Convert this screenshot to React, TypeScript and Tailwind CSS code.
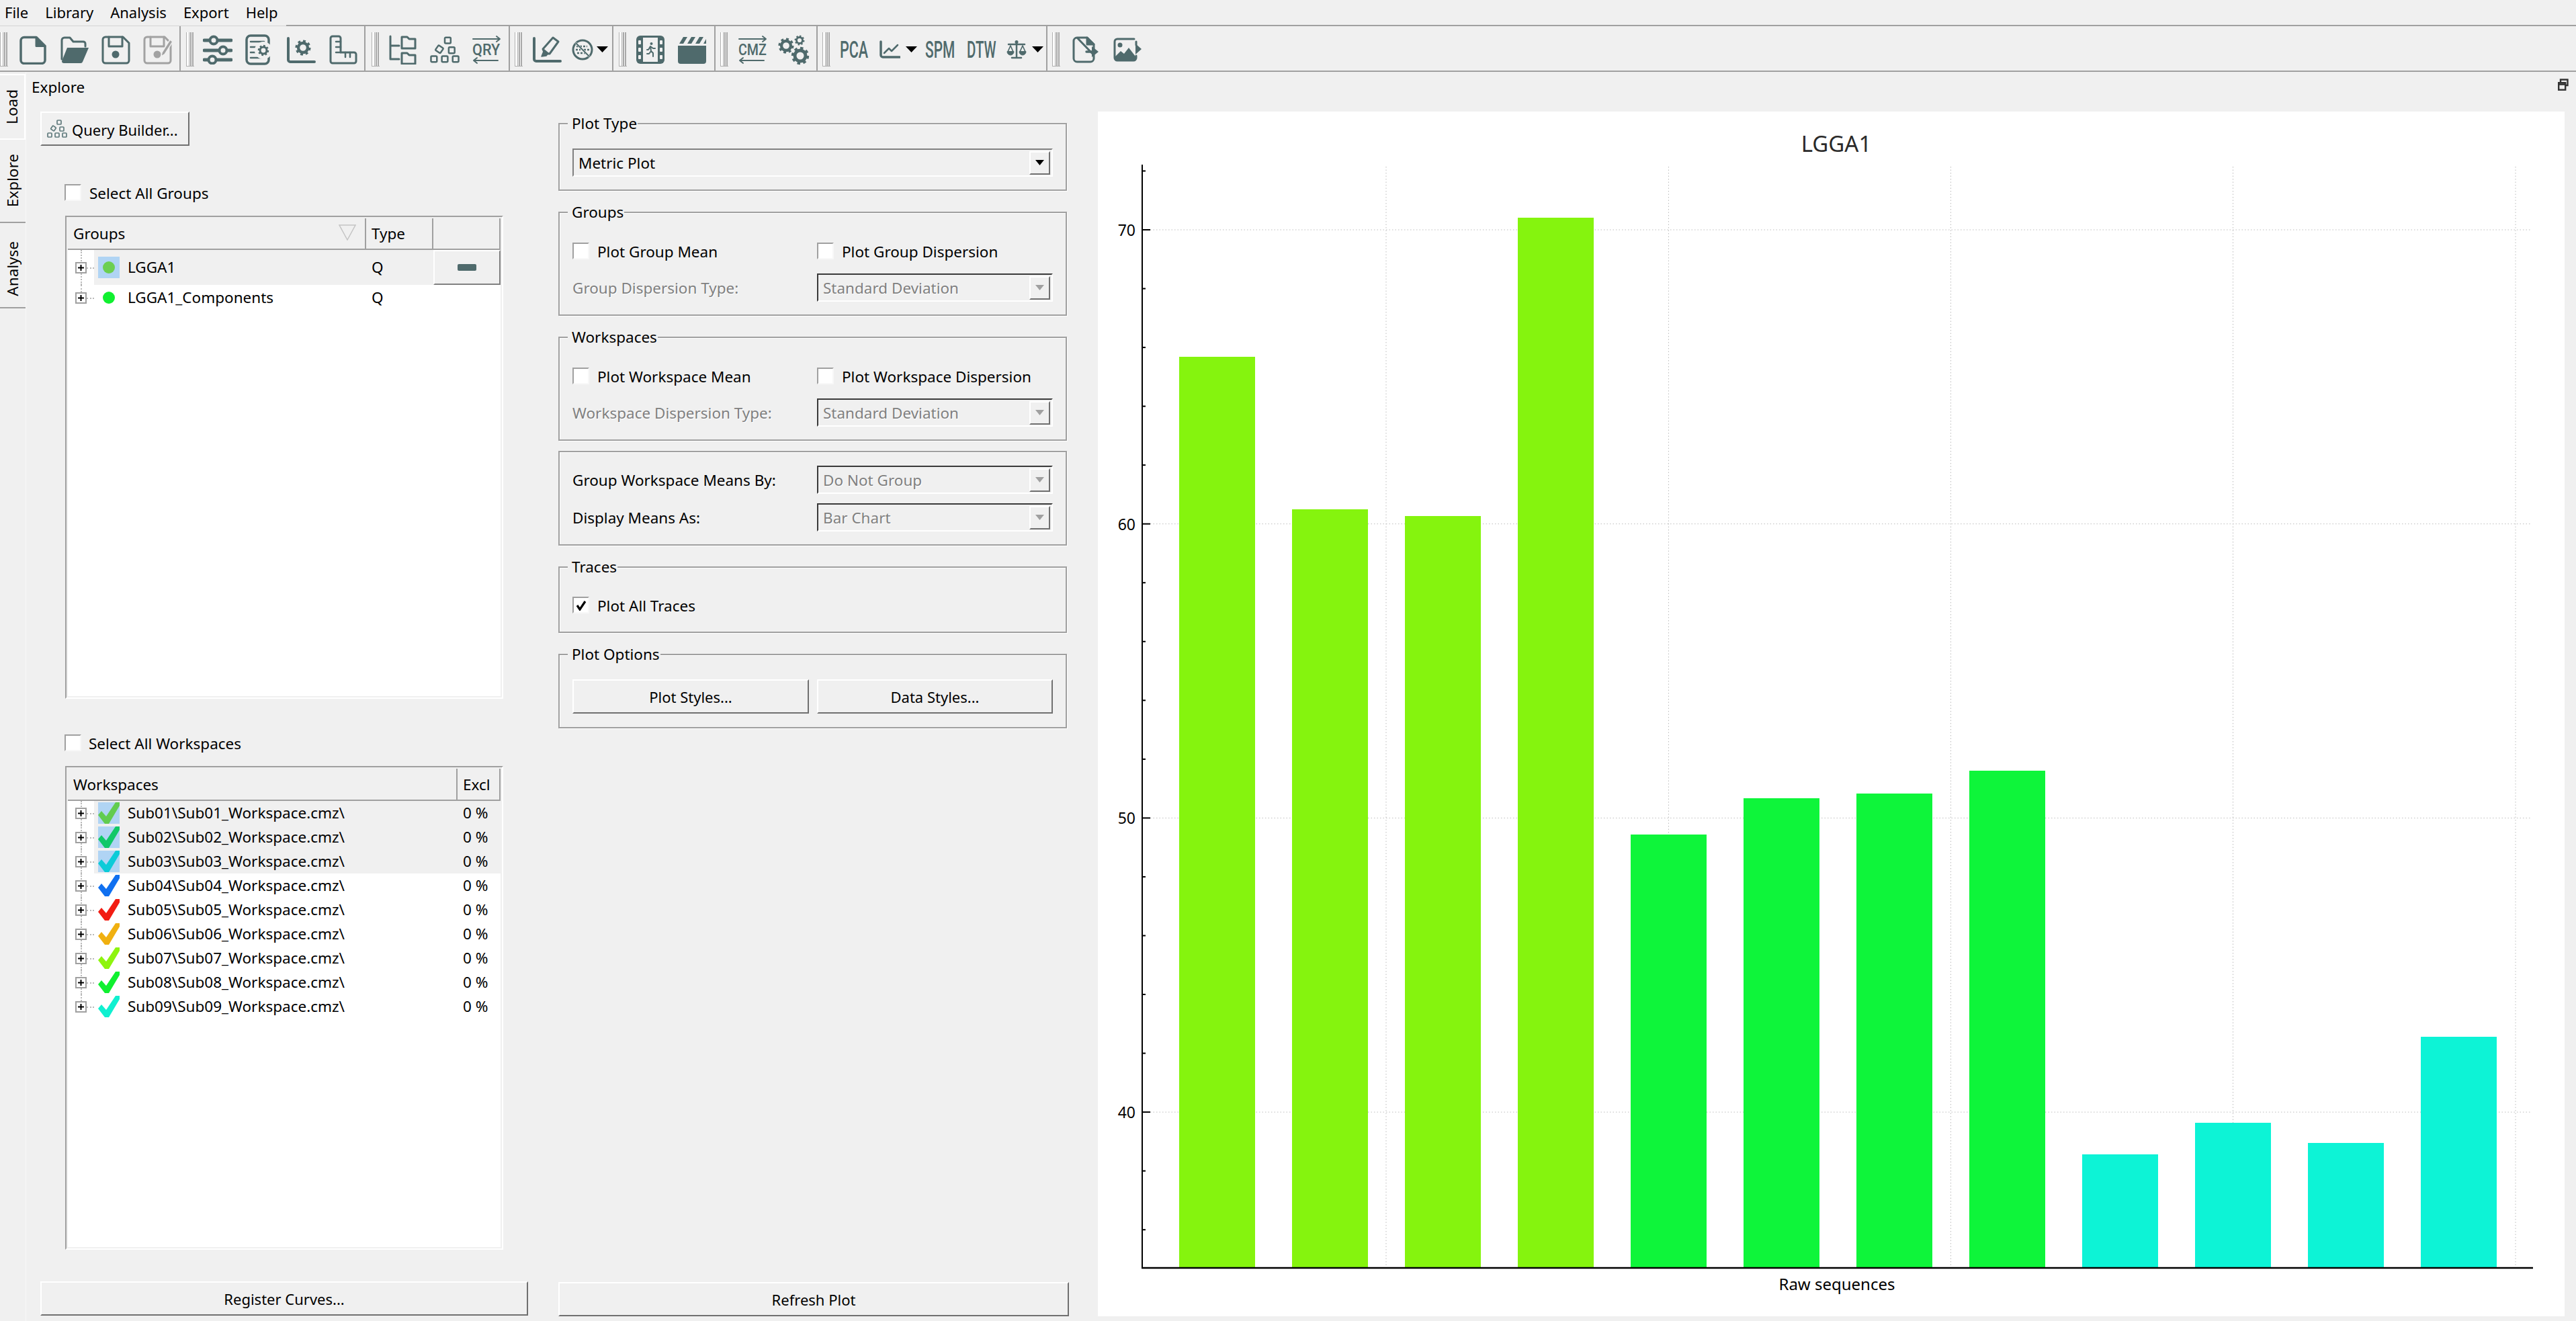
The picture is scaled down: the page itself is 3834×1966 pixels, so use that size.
import type { ReactNode } from "react";

// Bar heights are page-space y values for the tops, read off the reference plot.
const BARS = [
  { top: 531, fill: "#85f40e" },
  { top: 758, fill: "#85f40e" },
  { top: 768, fill: "#85f40e" },
  { top: 324, fill: "#85f40e" },
  { top: 1242, fill: "#0ef53a" },
  { top: 1188, fill: "#0ef53a" },
  { top: 1181, fill: "#0ef53a" },
  { top: 1147, fill: "#0ef53a" },
  { top: 1718, fill: "#0df3d6" },
  { top: 1671, fill: "#0df3d6" },
  { top: 1701, fill: "#0df3d6" },
  { top: 1543, fill: "#0df3d6" },
];

const WORKSPACES = [
  { name: "Sub01\\Sub01_Workspace.cmz\\", color: "#62cc50", selected: true },
  { name: "Sub02\\Sub02_Workspace.cmz\\", color: "#10c868", selected: true },
  { name: "Sub03\\Sub03_Workspace.cmz\\", color: "#0ccbd8", selected: true },
  { name: "Sub04\\Sub04_Workspace.cmz\\", color: "#1070f0", selected: false },
  { name: "Sub05\\Sub05_Workspace.cmz\\", color: "#f21c12", selected: false },
  { name: "Sub06\\Sub06_Workspace.cmz\\", color: "#f0b010", selected: false },
  { name: "Sub07\\Sub07_Workspace.cmz\\", color: "#8ef40e", selected: false },
  { name: "Sub08\\Sub08_Workspace.cmz\\", color: "#10f030", selected: false },
  { name: "Sub09\\Sub09_Workspace.cmz\\", color: "#10f0d0", selected: false },
];

function Ico({ w = 44, h = 44, children, className = "text-[#4f6a6c]" }: { w?: number; h?: number; children: ReactNode; className?: string }) {
  return (
    <svg width={w} height={h} viewBox={`0 0 ${w} ${h}`} fill="none" stroke="currentColor" strokeWidth={3} strokeLinecap="round" strokeLinejoin="round" className={`shrink-0 ${className}`}>
      {children}
    </svg>
  );
}

function Gear({ cx, cy, r }: { cx: number; cy: number; r: number }) {
  return (
    <g>
      <circle cx={cx} cy={cy} r={r} strokeWidth={r * 0.62} />
      <circle cx={cx} cy={cy} r={r * 1.4} strokeWidth={r * 0.5} pathLength={16} strokeDasharray="1 1" strokeLinecap="butt" />
    </g>
  );
}

// condensed toolbar lettering, squeezed with a transform
function IconText({ x, y, sx, size, children }: { x: number; y: number; sx: number; size: number; children: string }) {
  return (
    <text transform={`translate(${x} ${y}) scale(${sx} 1)`} fontFamily="Roboto, sans-serif" fontWeight={500} fontSize={size} fill="currentColor" stroke="none">
      {children}
    </text>
  );
}

const Caret = ({ muted = false }: { muted?: boolean }) => (
  <svg width="13" height="8" viewBox="0 0 13 8" className="shrink-0">
    <polygon points="0,0 13,0 6.5,8" fill={muted ? "#a0a0a0" : "#000"} />
  </svg>
);

const ToolCaret = () => (
  <svg width="17" height="9" viewBox="0 0 17 9" className="shrink-0">
    <polygon points="0,0 17,0 8.5,9" fill="#000" />
  </svg>
);

const SaveShape = () => (
  <>
    <path d="M6 3h26l9 9v26a4 4 0 0 1-4 4H6a4 4 0 0 1-4-4V7a4 4 0 0 1 4-4z" />
    <path d="M11 3v14h20V3" />
    <circle cx="21" cy="29" r="5.5" fill="currentColor" stroke="none" />
  </>
);

const NewIcon = () => (
  <Ico>
    <path d="M9 3.5h18l13 13v21a5 5 0 0 1-5 5H9a5 5 0 0 1-5-5v-29a5 5 0 0 1 5-5z" strokeWidth={3.5} />
    <path d="M27 3.5l13 13H27z" fill="currentColor" />
  </Ico>
);
const OpenIcon = () => (
  <Ico>
    <path d="M3 36V8a4 4 0 0 1 4-4h8l5 6h15a3 3 0 0 1 3 3v4" />
    <path d="M11 19h32l-9 21a3 3 0 0 1-3 2H6a3 3 0 0 1-3-3z" fill="currentColor" stroke="none" />
  </Ico>
);
const SaveIcon = () => (
  <Ico>
    <SaveShape />
  </Ico>
);
const SaveAsIcon = () => (
  <Ico className="text-[#a2a2a2]">
    <SaveShape />
    <path d="M28 26l12-19 4 3-12 19-5 3z" fill="currentColor" stroke="#f0f0f0" strokeWidth={1.5} />
  </Ico>
);
const SlidersIcon = () => (
  <Ico>
    <g strokeWidth={5}>
      <path d="M2 8h40M2 23h40M2 37h40" />
    </g>
    <g fill="#f0f0f0" strokeWidth={4}>
      <circle cx="16" cy="8" r="5.5" />
      <circle cx="30" cy="23" r="5.5" />
      <circle cx="14" cy="37" r="5.5" />
    </g>
  </Ico>
);
const DocGearIcon = () => (
  <Ico h={46}>
    <rect x="3" y="2" width="33" height="42" rx="6" strokeWidth={3.5} />
    <path d="M9 11h20M9 19h9M9 27h9M9 35h20" strokeWidth={2.5} />
    <circle cx="28" cy="24" r="13" fill="#f0f0f0" stroke="none" />
    <Gear cx={28} cy={24} r={5} />
  </Ico>
);
const ChartGearIcon = () => (
  <Ico>
    <path d="M3 5v32a3 3 0 0 0 3 3h36" strokeWidth={4} />
    <Gear cx={25} cy={19} r={7} />
  </Ico>
);
const RulerIcon = () => (
  <Ico>
    <path d="M7 2h9a3 3 0 0 1 3 3v21h20a3 3 0 0 1 3 3v10a3 3 0 0 1-3 3H7a3 3 0 0 1-3-3V5a3 3 0 0 1 3-3z" />
    <path d="M19 10h-7M19 18h-7M19 26h-7M26 26v7M33 26v7" strokeWidth={2.5} />
  </Ico>
);
const TreeIcon = () => (
  <Ico>
    <path d="M3 2v34h13M3 16h13" strokeWidth={3} />
    <path d="M20 3h8l3 3h9v14H20zM20 27h8l3 3h9v13H20z" strokeWidth={3} />
  </Ico>
);
const QueryShape = ({ sw }: { sw: number }) => (
  <g strokeWidth={sw}>
    <rect x="15" y="1" width="6" height="6" rx="1" />
    <rect x="6.5" y="10" width="6" height="6" rx="1" transform="rotate(35 9.5 13)" />
    <rect x="19" y="11" width="6" height="6" rx="1" />
    <rect x="1" y="20" width="6" height="6" rx="1" />
    <rect x="12" y="20" width="6" height="6" rx="1" />
    <rect x="23" y="20" width="6" height="6" rx="1" />
  </g>
);
const QueryIcon = () => (
  <svg width="30" height="27" viewBox="0 0 30 27" fill="none" stroke="currentColor" className="shrink-0 text-[#5f7a7c]">
    <QueryShape sw={1.7} />
  </svg>
);
const GraphIcon = () => (
  <svg width="44" height="44" viewBox="0 0 30 30" fill="none" stroke="currentColor" className="shrink-0 text-[#4f6a6c]">
    <g transform="translate(0 1.5)">
      <QueryShape sw={1.7} />
    </g>
  </svg>
);
const ArrowsText = ({ label, sx }: { label: string; sx: number }) => (
  <Ico>
    <IconText x={1} y={30} sx={sx} size={24}>{label}</IconText>
    <path d="M2 6h40M37 2l5 4-5 4M3 38h36M8 34l-5 4 5 4" strokeWidth={2} />
  </Ico>
);
const MarkerIcon = () => (
  <Ico>
    <path d="M3 5v31a3 3 0 0 0 3 3h36" strokeWidth={4} />
    <path d="M16 21L31 4l8 6-13 18h-7z" strokeWidth={3} />
    <path d="M18 22l6 5-3 4-7 1z" fill="currentColor" strokeWidth={1.5} />
  </Ico>
);
const NoDataIcon = () => (
  <Ico w={32} h={32}>
    <circle cx="16" cy="16" r="14" />
    <path d="M7 11h16M6 16h7M18 16h8M8 21h15" strokeWidth={2.6} strokeDasharray="3 2" strokeLinecap="butt" />
    <path d="M6 6l20 20" strokeWidth={3} stroke="#f0f0f0" />
    <path d="M6 6l20 20" strokeWidth={2} />
  </Ico>
);
const FilmIcon = () => (
  <Ico>
    <rect x="1" y="1" width="42" height="42" rx="6" fill="currentColor" stroke="none" />
    <rect x="11" y="4" width="22" height="36" fill="#f0f0f0" stroke="none" />
    <g fill="#f0f0f0" stroke="none">
      <rect x="4" y="8" width="4" height="6" rx="1" />
      <rect x="4" y="19" width="4" height="6" rx="1" />
      <rect x="4" y="30" width="4" height="6" rx="1" />
      <rect x="36" y="8" width="4" height="6" rx="1" />
      <rect x="36" y="19" width="4" height="6" rx="1" />
      <rect x="36" y="30" width="4" height="6" rx="1" />
    </g>
    <circle cx="23.5" cy="13" r="2" fill="currentColor" stroke="none" />
    <path d="M22 17l-3 5h-2M22 17l4 3h3M22 17l1 7 3 3v5M23 24l-3 4h-3" strokeWidth={2} />
  </Ico>
);
const ClapIcon = () => (
  <Ico>
    <path d="M1 16h42v23a4 4 0 0 1-4 4H5a4 4 0 0 1-4-4z" fill="currentColor" stroke="none" />
    <path d="M3 13L9 3h6L9 13zM15 13l6-10h6l-6 10zM27 13l6-10h6l-6 10zM39 13l4-7v7z" fill="currentColor" stroke="none" />
  </Ico>
);
const GearsIcon = () => (
  <Ico w={48} h={46}>
    <Gear cx={32} cy={9} r={4.5} />
    <Gear cx={12} cy={17} r={7} />
    <Gear cx={33} cy={32} r={8} />
  </Ico>
);
const LabelIcon = ({ label, sx }: { label: string; sx: number }) => (
  <Ico w={46} h={44}>
    <IconText x={1} y={34} sx={sx} size={36}>{label}</IconText>
  </Ico>
);
const LineChartIcon = () => (
  <Ico w={31} h={28}>
    <path d="M2 2v20a3 3 0 0 0 3 3h25" strokeWidth={3.5} />
    <path d="M7 19l7-7 4 4 9-9" strokeWidth={2.5} />
  </Ico>
);
const ScaleIcon = () => (
  <Ico w={30} h={30}>
    <path d="M15 3v24M8 27h14M3 7h24" strokeWidth={2.5} />
    <circle cx="15" cy="3.5" r="2.5" fill="currentColor" stroke="none" />
    <path d="M6 9L2 18h8zM24 9l-4 9h8z" strokeWidth={1.7} />
    <path d="M1 18a5 5 0 0 0 10 0zM19 18a5 5 0 0 0 10 0z" fill="currentColor" strokeWidth={1} />
  </Ico>
);
const ExportDocIcon = () => (
  <Ico w={40} h={40}>
    <path d="M7 2h15l10 10v7M32 28v5a5 5 0 0 1-5 5H7a5 5 0 0 1-5-5V7a5 5 0 0 1 5-5z" strokeWidth={3} />
    <path d="M22 2l10 10H22z" fill="currentColor" />
    <path d="M21 23h14" strokeWidth={3.5} />
    <path d="M29 15l10 8-10 8z" fill="currentColor" stroke="none" />
  </Ico>
);
const ExportImageIcon = () => (
  <Ico w={43} h={36}>
    <path d="M31 2H6a4 4 0 0 0-4 4v24a4 4 0 0 0 4 4h24a4 4 0 0 0 4-4v-3M34 11V6" strokeWidth={3} />
    <circle cx="10" cy="11" r="3.5" fill="currentColor" stroke="none" />
    <path d="M3 33v-5l8-8 5 4 7-9 10 13v5z" fill="currentColor" stroke="none" />
    <path d="M26 16h11" strokeWidth={3} stroke="#f0f0f0" />
    <path d="M33 9l9 8-9 8z" fill="currentColor" stroke="none" />
  </Ico>
);

function Grip() {
  return (
    <div className="flex h-[51px] w-[12px] shrink-0 gap-px border-b border-[#b0b0b0]">
      <div className="w-[5px] border-x border-[#b0b0b0] bg-white" />
      <div className="w-[5px] border-x-2 border-[#a8a8a8] bg-[#f8f8f8]" />
    </div>
  );
}

function ToolBar({ className, children }: { className: string; children: ReactNode }) {
  return <div className={`flex h-full shrink-0 items-center border-r-2 border-[#a0a0a0] pt-[3px] ${className}`}>{children}</div>;
}

function Tool({ className = "w-[62px] justify-center", children }: { className?: string; children: ReactNode }) {
  return <div className={`flex h-[60px] shrink-0 items-center ${className}`}>{children}</div>;
}

function Check({ checked = false }: { checked?: boolean }) {
  return (
    <span className="flex h-[25px] w-[25px] shrink-0 items-center justify-center border-2 border-t-[#a0a0a0] border-r-[#f8f8f8] border-b-[#f8f8f8] border-l-[#a0a0a0] bg-white">
      {checked && (
        <svg width="16" height="16" viewBox="0 0 16 16">
          <path d="M2 8l4 6 8-12" fill="none" stroke="#000" strokeWidth="3.2" />
        </svg>
      )}
    </span>
  );
}

function CheckRow({ label, checked, className = "gap-[12px]" }: { label: string; checked?: boolean; className?: string }) {
  return (
    <label className={`flex h-[25px] items-center whitespace-nowrap ${className}`}>
      <Check checked={checked} />
      <span className="pt-[3px]">{label}</span>
    </label>
  );
}

function Combo({ text, disabled = true, className }: { text: string; disabled?: boolean; className: string }) {
  return (
    <div
      className={`flex h-[42px] items-center justify-between border-2 border-r-white border-b-white pl-[7px] ${
        disabled ? "border-t-[#3a3a3a] border-l-[#3a3a3a] text-[#808080] [text-shadow:1px_1px_0_#fff]" : "border-t-[#808080] border-l-[#808080]"
      } ${className}`}
    >
      <span className="whitespace-nowrap pt-[3px]">{text}</span>
      <span className="mr-[2px] flex h-[35px] w-[31px] items-center justify-center border-t-2 border-r-2 border-b-2 border-l-2 border-t-white border-r-[#707070] border-b-[#707070] border-l-white">
        <Caret muted={disabled} />
      </span>
    </div>
  );
}

function Btn({ className, children }: { className: string; children: ReactNode }) {
  return (
    <button className={`flex h-[51px] shrink-0 items-center border-2 border-t-white border-r-[#707070] border-b-[#707070] border-l-white bg-[#f0f0f0] text-[22px] ${className}`}>
      {children}
    </button>
  );
}

function GroupBox({ title, className, children }: { title?: string; className: string; children: ReactNode }) {
  return (
    <section className={`relative w-[757px] border-2 border-[#a0a0a0] px-[19px] shadow-[inset_1px_1px_0_#fff,1px_1px_0_#fff] ${className}`}>
      {title && <span className="absolute -top-[15px] left-[12px] bg-[#f0f0f0] pr-px pl-[6px] leading-[28px]">{title}</span>}
      {children}
    </section>
  );
}

function Expander() {
  return (
    <span className="relative z-10 flex h-[17px] w-[17px] items-center justify-center border-2 border-[#a0a0a0] bg-white">
      <svg width="11" height="11" viewBox="0 0 11 11">
        <path d="M5.5 1v9M1 5.5h9" stroke="#000" strokeWidth="2" />
      </svg>
    </span>
  );
}

function TreeCell({ last = false }: { last?: boolean }) {
  return (
    <div className="relative flex h-full w-[39px] shrink-0 items-center pl-[11px]">
      <span className={`absolute top-0 left-[19px] border-l-2 border-dotted border-[#b8b8b8] ${last ? "h-1/2" : "h-full"}`} />
      <span className="absolute top-1/2 left-[28px] w-[11px] border-t-2 border-dotted border-[#b8b8b8]" />
      <Expander />
    </div>
  );
}

function Frame({ className, children }: { className: string; children: ReactNode }) {
  return (
    <div className={`ml-[37px] flex w-[652px] flex-col border-2 border-t-[#a0a0a0] border-r-white border-b-white border-l-[#a0a0a0] ${className}`}>
      <div className="flex flex-1 flex-col overflow-hidden border-2 border-[#f0f0f0] bg-white">{children}</div>
    </div>
  );
}

function HeadCell({ className, children }: { className: string; children?: ReactNode }) {
  return <div className={`relative flex h-full shrink-0 items-center border-r-2 border-[#a0a0a0] pt-[2px] pl-[8px] ${className}`}>{children}</div>;
}

function Tick({ color, selected }: { color: string; selected: boolean }) {
  return (
    <svg width="32" height="32" viewBox="0 0 32 32" className={`shrink-0 ${selected ? "bg-[#b0d4f4]" : ""}`}>
      <polygon points="0,19 5,13 12,21 26,0 32,0 32,5 16,32 10,32" fill={color} />
    </svg>
  );
}

function Dot({ color, selected }: { color: string; selected: boolean }) {
  return (
    <span className={`flex h-[32px] w-[32px] shrink-0 items-center justify-center ${selected ? "bg-[#b0d4f4]" : ""}`}>
      <span className="h-[18px] w-[18px] rounded-full" style={{ backgroundColor: color }} />
    </span>
  );
}

function TabLabel({ className, children }: { className: string; children: string }) {
  return (
    <div className={`flex shrink-0 items-center justify-center ${className}`}>
      <span className="rotate-180 [writing-mode:vertical-rl]">{children}</span>
    </div>
  );
}

function Chart() {
  const yOf = (v: number) => 342 + (70 - v) * 43.77;
  const ticks: number[] = [];
  for (let v = 36; v <= 72; v += 2) ticks.push(v);
  const grid = [2063, 2483.5, 2903.5, 3323.5, 3744];
  return (
    <svg viewBox="1634 166 2183 1793" className="block h-full w-full">
      <g stroke="#bcbcbc" strokeWidth="1" strokeDasharray="1.5 3">
        {grid.map((x) => (
          <line key={x} x1={x} x2={x} y1={248} y2={1885} />
        ))}
        {[70, 60, 50, 40].map((v) => (
          <line key={v} x1={1712} x2={3766} y1={yOf(v)} y2={yOf(v)} />
        ))}
      </g>
      {BARS.map((b, i) => (
        <rect key={i} x={1755 + 168 * i} y={b.top} width={113} height={1886 - b.top} fill={b.fill} />
      ))}
      <g stroke="#000">
        <line x1={1700} x2={1700} y1={245} y2={1888} strokeWidth={2} />
        <line x1={1699} x2={3770} y1={1887} y2={1887} strokeWidth={2.5} />
        {ticks.map((v) => (
          <line key={v} x1={1700} x2={v % 10 === 0 ? 1712 : 1705} y1={yOf(v)} y2={yOf(v)} strokeWidth={2} />
        ))}
      </g>
      <g fontSize={23} fill="#000" textAnchor="end">
        {[70, 60, 50, 40].map((v) => (
          <text key={v} x={1690} y={yOf(v) + 9}>
            {v}
          </text>
        ))}
      </g>
      <text x={2733} y={226} fontSize={33} fill="#2a2a2a" textAnchor="middle">
        LGGA1
      </text>
      <text x={2734} y={1920} fontSize={24} fill="#000" textAnchor="middle">
        Raw sequences
      </text>
    </svg>
  );
}

export default function App() {
  return (
    <div className="flex h-screen w-full flex-col overflow-hidden bg-[#f0f0f0] font-['Noto_Sans',sans-serif] text-[22.5px] leading-none text-black">
      {/* menu */}
      <div className="flex h-[39px] shrink-0">
        <div className="flex h-full w-[426px] shrink-0 items-center gap-[25px] border-b border-[#d4d4d4] pb-[2px] pl-[7px] text-[22px]">
          <span>File</span>
          <span>Library</span>
          <span>Analysis</span>
          <span>Export</span>
          <span>Help</span>
        </div>
        <div className="flex-1 border-b-2 border-[#a0a0a0]" />
      </div>

      {/* toolbars */}
      <div className="flex h-[68px] shrink-0 gap-[2px] border-b-2 border-[#a0a0a0]">
        <ToolBar className="w-[269px]">
          <Grip />
          <div className="w-[6px]" />
          <Tool><NewIcon /></Tool>
          <Tool><OpenIcon /></Tool>
          <Tool><SaveIcon /></Tool>
          <Tool><SaveAsIcon /></Tool>
        </ToolBar>
        <ToolBar className="w-[273px] pl-[6px]">
          <Grip />
          <div className="w-[4px]" />
          <Tool><SlidersIcon /></Tool>
          <Tool><DocGearIcon /></Tool>
          <Tool><ChartGearIcon /></Tool>
          <Tool><RulerIcon /></Tool>
        </ToolBar>
        <ToolBar className="w-[213px] pl-[7px]">
          <Grip />
          <div className="w-[4px]" />
          <Tool><TreeIcon /></Tool>
          <Tool><GraphIcon /></Tool>
          <Tool><ArrowsText label="QRY" sx={0.9} /></Tool>
        </ToolBar>
        <ToolBar className="w-[152px] pl-[5px]">
          <Grip />
          <div className="w-[5px]" />
          <Tool><MarkerIcon /></Tool>
          <Tool className="w-[58px] gap-[5px] pl-[6px]"><NoDataIcon /><ToolCaret /></Tool>
        </ToolBar>
        <ToolBar className="w-[150px] pl-[6px]">
          <Grip />
          <div className="w-[4px]" />
          <Tool><FilmIcon /></Tool>
          <Tool><ClapIcon /></Tool>
        </ToolBar>
        <ToolBar className="w-[150px] pl-[5px]">
          <Grip />
          <div className="w-[5px]" />
          <Tool><ArrowsText label="CMZ" sx={0.82} /></Tool>
          <Tool><GearsIcon /></Tool>
        </ToolBar>
        <ToolBar className="w-[340px] pl-[5px]">
          <Grip />
          <div className="w-[5px]" />
          <Tool><LabelIcon label="PCA" sx={0.6} /></Tool>
          <Tool className="w-[65px] gap-[8px] pl-[6px]"><LineChartIcon /><ToolCaret /></Tool>
          <Tool><LabelIcon label="SPM" sx={0.58} /></Tool>
          <Tool><LabelIcon label="DTW" sx={0.57} /></Tool>
          <Tool className="w-[62px] gap-[8px] pl-[6px]"><ScaleIcon /><ToolCaret /></Tool>
        </ToolBar>
        <div className="flex h-full items-center pt-[3px] pl-[5px]">
          <Grip />
          <div className="w-[7px]" />
          <Tool><ExportDocIcon /></Tool>
          <Tool><ExportImageIcon /></Tool>
        </div>
      </div>

      <div className="flex min-h-0 flex-1">
        {/* vertical tabs */}
        <div className="flex w-[39px] shrink-0 flex-col border-r border-[#f8f8f8] pt-[3px]">
          <TabLabel className="h-[98px] border-2 border-l-0 border-white">Load</TabLabel>
          <TabLabel className="h-[122px]">Explore</TabLabel>
          <TabLabel className="h-[129px] border-y-2 border-[#a0a0a0] pt-[10px]">Analyse</TabLabel>
        </div>

        <div className="flex min-w-0 flex-1 flex-col pb-[7px]">
          <div className="flex h-[59px] shrink-0 items-start justify-between pt-[12px] pr-[11px] pl-[8px]">
            <span>Explore</span>
            <svg width="16" height="18" viewBox="0 0 16 18" className="mt-[-2px]" fill="none" stroke="#333" strokeWidth="2.4">
              <path d="M4 5V1.5h10.5V10H11" />
              <rect x="1.2" y="6.2" width="10" height="10.5" />
              <path d="M1 8.5h10" strokeWidth="2.6" />
            </svg>
          </div>

          <div className="flex min-h-0 flex-1 pl-[21px]">
            {/* left column */}
            <div className="flex w-[726px] shrink-0 flex-col">
              <Btn className="w-[222px] gap-[7px] pl-[8px]">
                <QueryIcon />
                <span className="pt-[2px]">Query Builder...</span>
              </Btn>
              <CheckRow className="mt-[57px] ml-[36px] gap-[12px]" label="Select All Groups" />
              <Frame className="mt-[22px] h-[719px]">
                <div className="flex h-[47px] shrink-0 items-center border-b-2 border-[#a0a0a0] bg-[#f0f0f0]">
                  <HeadCell className="w-[444px]">
                    Groups
                    <svg width="26" height="24" viewBox="0 0 26 24" className="absolute top-[9px] right-[13px]">
                      <polygon points="1,1 25,1 13,23" fill="none" stroke="#c4c4c4" strokeWidth="1.5" />
                    </svg>
                  </HeadCell>
                  <HeadCell className="w-[100px]">Type</HeadCell>
                  <HeadCell className="w-[100px]" />
                </div>
                <div className="flex h-[52px] shrink-0 items-center">
                  <TreeCell />
                  <div className="flex h-full w-[405px] shrink-0 items-center gap-[12px] bg-[#f0f0f0] pl-[6px]">
                    <Dot color="#6ccf50" selected />
                    <span>LGGA1</span>
                  </div>
                  <div className="flex h-full w-[100px] shrink-0 items-center bg-[#f0f0f0] pl-[8px]">Q</div>
                  <div className="flex h-full w-[100px] shrink-0 items-center justify-center border-2 border-t-white border-r-[#808080] border-b-[#808080] border-l-white bg-[#f0f0f0]">
                    <span className="h-[10px] w-[28px] rounded-[2px] bg-[#4f6a6c]" />
                  </div>
                </div>
                <div className="flex h-[38px] shrink-0 items-center">
                  <TreeCell last />
                  <div className="flex h-full w-[405px] shrink-0 items-center gap-[12px] pl-[6px]">
                    <Dot color="#10f030" selected={false} />
                    <span>LGGA1_Components</span>
                  </div>
                  <div className="pl-[8px]">Q</div>
                </div>
              </Frame>
              <CheckRow className="mt-[53px] ml-[36px] gap-[11px]" label="Select All Workspaces" />
              <Frame className="mt-[22px] h-[720px]">
                <div className="flex h-[48px] shrink-0 items-center border-b-2 border-[#a0a0a0] bg-[#f0f0f0]">
                  <HeadCell className="w-[580px]">Workspaces</HeadCell>
                  <HeadCell className="w-[64px]">Excl</HeadCell>
                </div>
                {WORKSPACES.map((w, i) => (
                  <div key={w.name} className="flex h-[36px] shrink-0 items-center">
                    <TreeCell last={i === WORKSPACES.length - 1} />
                    <div className={`flex h-full min-w-0 flex-1 items-center ${w.selected ? "bg-[#f0f0f0]" : ""}`}>
                      <div className="flex w-[541px] shrink-0 items-center gap-[12px] pl-[6px]">
                        <Tick color={w.color} selected={w.selected} />
                        <span>{w.name}</span>
                      </div>
                      <span className="pl-[8px]">0 %</span>
                    </div>
                  </div>
                ))}
              </Frame>
              <Btn className="mt-[47px] w-[726px] justify-center">Register Curves...</Btn>
            </div>

            {/* plot settings */}
            <div className="ml-[45px] flex w-[760px] shrink-0 flex-col pt-[17px]">
              <GroupBox title="Plot Type" className="h-[101px] pt-[36px]">
                <Combo text="Metric Plot" disabled={false} className="w-[715px]" />
              </GroupBox>
              <GroupBox title="Groups" className="mt-[31px] h-[155px] pt-[44px]">
                <div className="grid grid-cols-[364px_351px] items-center gap-y-[21px]">
                  <CheckRow label="Plot Group Mean" />
                  <CheckRow label="Plot Group Dispersion" />
                  <span className="pt-[3px] text-[#808080] [text-shadow:1px_1px_0_#fff]">Group Dispersion Type:</span>
                  <Combo text="Standard Deviation" className="w-[351px]" />
                </div>
              </GroupBox>
              <GroupBox title="Workspaces" className="mt-[31px] h-[155px] pt-[44px]">
                <div className="grid grid-cols-[364px_351px] items-center gap-y-[21px]">
                  <CheckRow label="Plot Workspace Mean" />
                  <CheckRow label="Plot Workspace Dispersion" />
                  <span className="pt-[3px] text-[#808080] [text-shadow:1px_1px_0_#fff]">Workspace Dispersion Type:</span>
                  <Combo text="Standard Deviation" className="w-[351px]" />
                </div>
              </GroupBox>
              <GroupBox className="mt-[15px] h-[141px] pt-[20px]">
                <div className="grid grid-cols-[364px_351px] items-center gap-y-[14px]">
                  <span className="pt-[3px]">Group Workspace Means By:</span>
                  <Combo text="Do Not Group" className="w-[351px]" />
                  <span className="pt-[3px]">Display Means As:</span>
                  <Combo text="Bar Chart" className="w-[351px]" />
                </div>
              </GroupBox>
              <GroupBox title="Traces" className="mt-[31px] h-[99px] pt-[43px]">
                <CheckRow checked label="Plot All Traces" />
              </GroupBox>
              <GroupBox title="Plot Options" className="mt-[31px] h-[111px] pt-[36px]">
                <div className="flex gap-[12px]">
                  <Btn className="w-[352px] justify-center">Plot Styles...</Btn>
                  <Btn className="w-[351px] justify-center">Data Styles...</Btn>
                </div>
              </GroupBox>
              <Btn className="mt-auto w-[760px] justify-center">Refresh Plot</Btn>
            </div>

            {/* plot */}
            <div className="ml-[43px] h-full w-[2183px] shrink-0 bg-white">
              <Chart />
            </div>
          </div>
        </div>
      </div>
    </div>
  );
}
